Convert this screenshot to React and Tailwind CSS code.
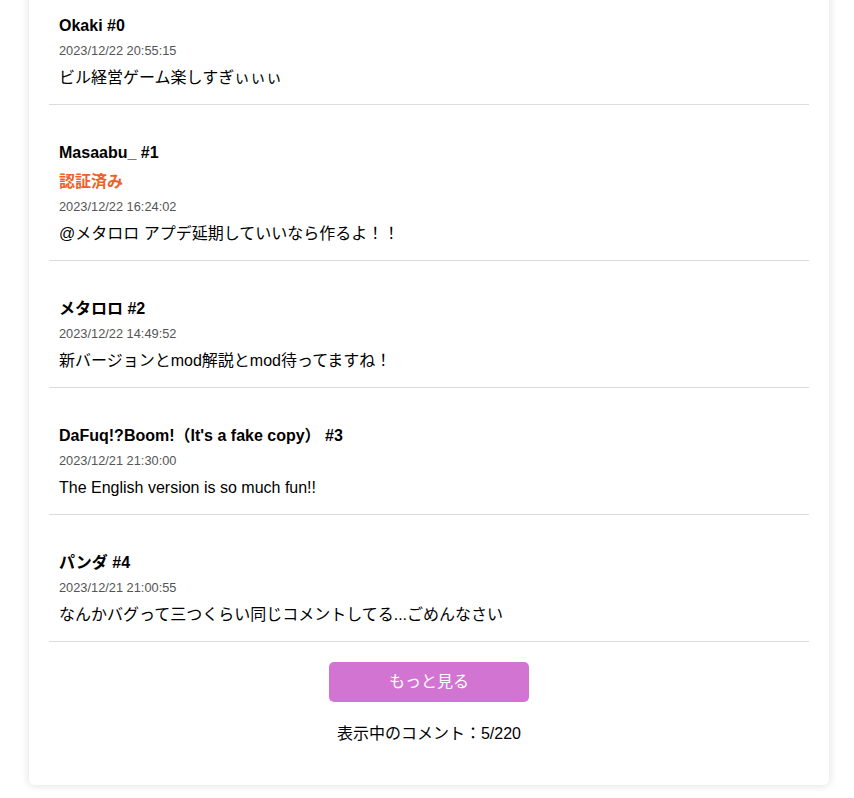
import React from 'react';

const comments = [
  { name: 'Okaki', date: '2023/12/22 20:55:15', body: 'ビル経営ゲーム楽しすぎぃぃぃ' },
  { name: 'Masaabu_', verified: true, date: '2023/12/22 16:24:02', body: '@メタロロ アプデ延期していいなら作るよ！！' },
  { name: 'メタロロ', date: '2023/12/22 14:49:52', body: '新バージョンとmod解説とmod待ってますね！' },
  { name: 'DaFuq!?Boom!（It\'s a fake copy）', date: '2023/12/21 21:30:00', body: 'The English version is so much fun!!' },
  { name: 'パンダ', date: '2023/12/21 21:00:55', body: 'なんかバグって三つくらい同じコメントしてる...ごめんなさい' },
];

function Comment({ c, idx }) {
  return (
    <div className="border-b border-[#dcdcdc] px-[10px] pt-[36px] pb-[14px]">
      <div className="text-[16px] leading-[24px] font-bold text-black">{c.name} #{idx}</div>
      {c.verified && (
        <div className="text-[16px] leading-[24px] font-bold text-[#f0612a] mt-[5px]">認証済み</div>
      )}
      <div className="text-[12.8px] leading-[16px] text-[#555] mt-[5px]">{c.date}</div>
      <div className="text-[16px] leading-[24px] text-black mt-[7px]">{c.body}</div>
    </div>
  );
}

export default function App() {
  return (
    <div className="min-h-screen bg-white overflow-hidden" style={{ fontFamily: '"Liberation Sans", "Noto Sans CJK JP", sans-serif' }}>
      <div className="ml-[29px] mt-[-42px] w-[800px] bg-white rounded-[6px] shadow-[0_0_10px_rgba(0,0,0,0.14)] px-[20px] pt-[20px] pb-[39px]">
        {comments.map((c, i) => (
          <Comment key={i} c={c} idx={i} />
        ))}
        <div className="flex flex-col items-center">
          <button type="button" className="mt-[20px] w-[200px] h-[40px] rounded-[5px] bg-[#d275d2] text-white text-[16px]">
            もっと見る
          </button>
          <div className="mt-[20px] text-[16px] leading-[24px] text-black">表示中のコメント：5/220</div>
        </div>
      </div>
    </div>
  );
}
